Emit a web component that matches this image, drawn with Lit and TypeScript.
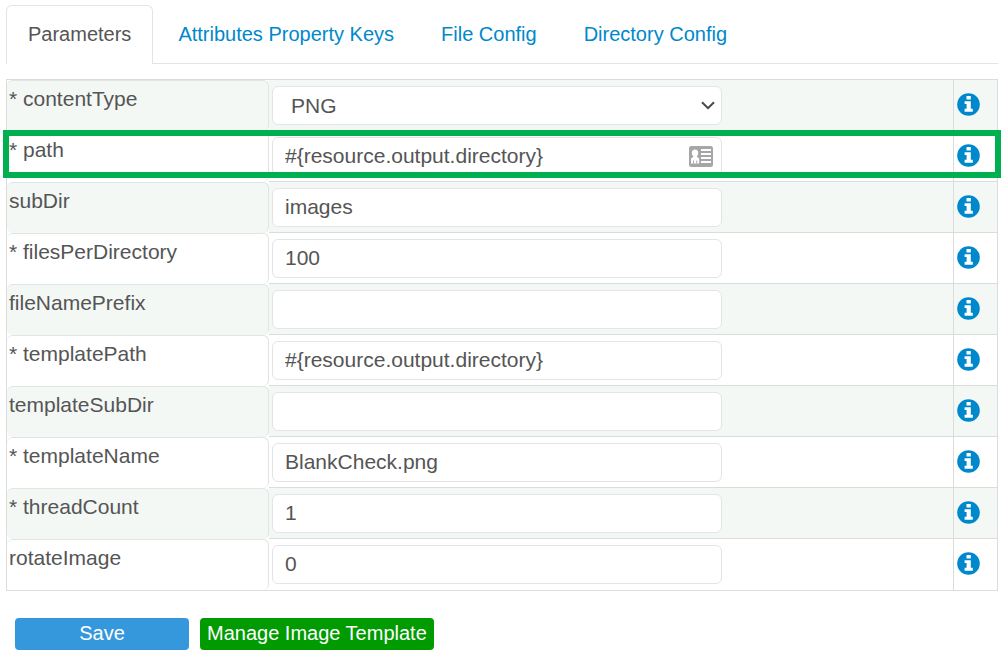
import { LitElement, html, css, nothing } from "lit";
import { customElement, state } from "lit/decorators.js";
import { classMap } from "lit/directives/class-map.js";

interface Field {
  name: string;
  value: string;
  required?: boolean;
  options?: string[];
  highlighted?: boolean;
  contactHint?: boolean;
}

const TABS = ["Parameters", "Attributes Property Keys", "File Config", "Directory Config"];

const FIELDS: Field[] = [
  { name: "contentType", value: "PNG", required: true, options: ["PNG", "JPEG", "TIFF"] },
  {
    name: "path",
    value: "#{resource.output.directory}",
    required: true,
    highlighted: true,
    contactHint: true,
  },
  { name: "subDir", value: "images" },
  { name: "filesPerDirectory", value: "100", required: true },
  { name: "fileNamePrefix", value: "" },
  { name: "templatePath", value: "#{resource.output.directory}", required: true },
  { name: "templateSubDir", value: "" },
  { name: "templateName", value: "BlankCheck.png", required: true },
  { name: "threadCount", value: "1", required: true },
  { name: "rotateImage", value: "0" },
];

const infoIcon = html`<svg class="info-icon" viewBox="0 0 23 23" aria-hidden="true">
  <circle cx="11.5" cy="11.5" r="11.3" fill="currentColor" />
  <path fill="#fff" d="M9.500 3h4.300v3.400H9.500zM7.600 8.200h6.200v7.600h2v2.900H7.600v-2.900h2v-4.700h-2z" />
</svg>`;

const chevronIcon = html`<svg class="chevron" viewBox="0 0 14 9" aria-hidden="true">
  <path d="M1 1.2 7 7.2 13 1.2" fill="none" stroke="#484848" stroke-width="2" />
</svg>`;

const cardIcon = html`<svg class="card-icon" viewBox="0 0 24 21" aria-hidden="true">
  <rect width="24" height="21" rx="2.5" fill="#a6a6a6" />
  <path
    fill="#fff"
    d="M6 3.400c2 0 3.200 1.400 3.200 3.500 0 1.400-.5 2.500-1.200 3.200v.9l1.400.7c.6.3.8.8.8 1.500v4.300H2v-4.300c0-.7.3-1.200.9-1.500L4.300 11v-.9C3.300 9.400 2.800 8.300 2.800 6.900c0-2.100 1.200-3.500 3.200-3.500z"
  />
  <path fill="#a6a6a6" d="M4 14.500h.9v3H4zM7.300 14.500h.9v3h-.9z" />
  <path fill="#fff" d="M12 3h10v2h-10zM12 7h10v2h-10zM12 11h10v2h-10zM12 15h10v2h-10z" />
</svg>`;

@customElement("app-root")
export class AppRoot extends LitElement {
  static styles = css`
    :host {
      display: block;
      padding: 5px 8px 8px 6px;
      font-family: "Liberation Sans", Arial, sans-serif;
      font-size: 21px;
      line-height: 25px;
      color: #555;
      background: #fff;
    }
    * {
      box-sizing: border-box;
    }
    .tabs {
      display: flex;
      gap: 3px;
      border-bottom: 1px solid #e2e4e5;
      margin-bottom: 15px;
    }
    .tab {
      height: 59px;
      margin-bottom: -1px;
      padding: 0 21px;
      border: 1px solid transparent;
      border-bottom: 0;
      border-radius: 6px 6px 0 0;
      font-size: 20px;
      line-height: 56px;
      color: #0088cc;
      text-decoration: none;
      white-space: nowrap;
    }
    .tab.active {
      color: #555;
      background: #fff;
      border-color: #e2e4e5;
    }
    .grid {
      width: 100%;
      border: 1px solid #dcdcdc;
      border-collapse: separate;
      border-spacing: 0;
      table-layout: fixed;
    }
    .col-label {
      width: 262px;
    }
    .col-info {
      width: 44px;
    }
    .row {
      position: relative;
      background: #fff;
    }
    .row:nth-child(odd) {
      background: #f3f8f5;
    }
    .highlight {
      position: absolute;
      inset: -1px -4px 4px;
      border: 6px solid #00b050;
      pointer-events: none;
      z-index: 1;
    }
    .label-cell {
      padding: 5px 2px;
      vertical-align: top;
      text-align: left;
      font-weight: normal;
      border: 1px solid #e0e4e2;
      border-width: 1px 1px 0 0;
      border-radius: 6px;
    }
    .value-cell,
    .info-cell {
      padding: 6px 3px 5px;
      vertical-align: top;
      border-bottom: 1px solid #dcdcdc;
    }
    .info-cell {
      border-left: 1px solid #dcdcdc;
    }
    .row:last-child .value-cell,
    .row:last-child .info-cell {
      padding-bottom: 6px;
      border-bottom: 0;
    }
    .control {
      position: relative;
      max-width: 450px;
    }
    .field {
      display: block;
      width: 100%;
      height: 39px;
      margin: 0;
      padding: 0 12px 2px;
      border: 1px solid #e3e4e8;
      border-radius: 6px;
      background: #fff;
      font: inherit;
      color: inherit;
      appearance: none;
    }
    .select {
      padding: 0 18px;
    }
    .chevron,
    .card-icon {
      position: absolute;
      pointer-events: none;
    }
    .chevron {
      width: 14px;
      height: 9px;
      right: 7px;
      top: 15px;
    }
    .card-icon {
      width: 24px;
      height: 21px;
      right: 9px;
      top: 9px;
    }
    .info {
      display: block;
      margin: 0;
      padding: 7px 0 0;
      border: 0;
      background: none;
      color: #0088cc;
      cursor: pointer;
    }
    .info-icon {
      display: block;
      width: 23px;
      height: 23px;
    }
    .actions {
      display: flex;
      gap: 11px;
      padding: 27px 9px 0;
    }
    .button {
      height: 32px;
      padding: 0 7px 2px;
      border: 0;
      border-radius: 4px;
      font: inherit;
      font-size: 20px;
      line-height: 30px;
      color: #fff;
      white-space: nowrap;
      cursor: pointer;
    }
    .save {
      min-width: 174px;
      background: #3598dc;
    }
    .manage {
      background: #009b00;
    }
  `;

  @state() private activeTab = TABS[0];

  private selectTab(event: Event, tab: string) {
    event.preventDefault();
    this.activeTab = tab;
  }

  private renderControl(field: Field) {
    if (field.options) {
      return html`<select class="field select" id=${field.name}>
          ${field.options.map(
            (option) => html`<option ?selected=${option === field.value}>${option}</option>`
          )}
        </select>
        ${chevronIcon}`;
    }
    return html`<input class="field" type="text" id=${field.name} .value=${field.value} />
      ${field.contactHint ? cardIcon : nothing}`;
  }

  private renderRow(field: Field) {
    return html`<tr class="row">
      <th class="label-cell" scope="row">
        <label for=${field.name}>${field.required ? "* " : ""}${field.name}</label>
        ${field.highlighted ? html`<span class="highlight"></span>` : nothing}
      </th>
      <td class="value-cell"><div class="control">${this.renderControl(field)}</div></td>
      <td class="info-cell">
        <button class="info" type="button" aria-label="About ${field.name}">${infoIcon}</button>
      </td>
    </tr>`;
  }

  render() {
    return html`
      <nav class="tabs">
        ${TABS.map(
          (tab) => html`<a
            href="#"
            class=${classMap({ tab: true, active: tab === this.activeTab })}
            @click=${(event: Event) => this.selectTab(event, tab)}
            >${tab}</a
          >`
        )}
      </nav>
      <form @submit=${(event: Event) => event.preventDefault()}>
        <table class="grid">
          <colgroup>
            <col class="col-label" />
            <col />
            <col class="col-info" />
          </colgroup>
          <tbody>
            ${FIELDS.map((field) => this.renderRow(field))}
          </tbody>
        </table>
        <div class="actions">
          <button class="button save" type="submit">Save</button>
          <button class="button manage" type="button">Manage Image Template</button>
        </div>
      </form>
    `;
  }
}
